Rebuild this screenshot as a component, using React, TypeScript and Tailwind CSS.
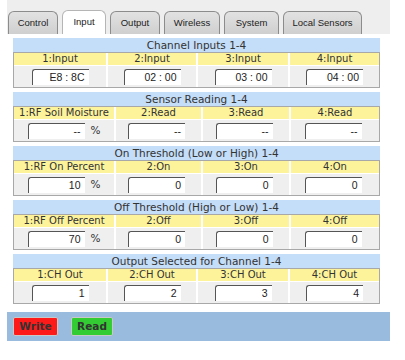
import { ReactNode } from 'react'

const tabs = [
  { name: 'Control', w: 'w-[50px]' },
  { name: 'Input', w: 'w-[44px]', active: true },
  { name: 'Output', w: 'w-[50px]' },
  { name: 'Wireless', w: 'w-[56px]' },
  { name: 'System', w: 'w-[55px]' },
  { name: 'Local Sensors', w: 'w-[79px]' },
]

interface Section {
  title: string
  cols: string
  labels: string[]
  values: string[]
  unit?: boolean
}

const wide = 'grid-cols-[100px_85px_86px_1fr]'
const narrow = 'grid-cols-[92px_88px_90px_1fr]'

const sections: Section[] = [
  {
    title: 'Channel Inputs 1-4',
    cols: narrow,
    labels: ['1:Input', '2:Input', '3:Input', '4:Input'],
    values: ['E8 : 8C', '02 : 00', '03 : 00', '04 : 00'],
  },
  {
    title: 'Sensor Reading 1-4',
    cols: wide,
    labels: ['1:RF Soil Moisture', '2:Read', '3:Read', '4:Read'],
    values: ['--', '--', '--', '--'],
    unit: true,
  },
  {
    title: 'On Threshold (Low or High) 1-4',
    cols: wide,
    labels: ['1:RF On Percent', '2:On', '3:On', '4:On'],
    values: ['10', '0', '0', '0'],
    unit: true,
  },
  {
    title: 'Off Threshold (High or Low) 1-4',
    cols: wide,
    labels: ['1:RF Off Percent', '2:Off', '3:Off', '4:Off'],
    values: ['70', '0', '0', '0'],
    unit: true,
  },
  {
    title: 'Output Selected for Channel 1-4',
    cols: narrow,
    labels: ['1:CH Out', '2:CH Out', '3:CH Out', '4:CH Out'],
    values: ['1', '2', '3', '4'],
  },
]

function Field({ value }: { value: string }) {
  return (
    <div className="h-[16px] w-[57px] rounded-tl-[3px] border-l border-t border-[#555] bg-white pr-[4px] text-right font-['Liberation_Sans',sans-serif] text-[10.5px] leading-[15px] text-[#222]">
      {value}
    </div>
  )
}

function Cell({ children, first, unit }: { children: ReactNode; first: boolean; unit?: boolean }) {
  return (
    <div className={`flex h-[21px] items-center justify-center bg-[#efefef] ${!first && unit ? 'pr-[4px]' : ''}`}>
      {children}
      {first && unit && <span className="ml-[6px] text-[10.5px] text-[#333]">%</span>}
    </div>
  )
}

export default function App() {
  return (
    <div className="h-[360px] w-[405px] bg-white font-['DejaVu_Sans',sans-serif]">
      <div className="ml-[7px] w-[383px]">
        <div className="flex h-[34px] items-end gap-[4px] bg-[#eeeeee] pl-[1px]">
          {tabs.map((t) => (
            <div
              key={t.name}
              className={`${t.w} flex h-[23px] items-center justify-center rounded-t-[6px] border border-b-0 font-['Liberation_Sans',sans-serif] text-[9.5px] text-[#222] ${
                t.active ? 'h-[24px] border-[#b5b5b5] bg-white' : 'border-[#8c8c8c] bg-gradient-to-b from-[#e2e2e2] to-[#cfcfcf]'
              }`}
            >
              {t.name}
            </div>
          ))}
        </div>

        <div className="flex flex-col gap-[4px] bg-white pb-[8px] pl-[6px] pr-[10px] pt-[4px]">
          {sections.map((s) => (
            <div key={s.title}>
              <div className="h-[14px] bg-[#c4ddf8] text-center text-[10.5px] leading-[14px] text-[#333]">{s.title}</div>
              <div className={`grid ${s.cols} gap-x-[2px] gap-y-px border border-[#a8a8a8] bg-white`}>
                {s.labels.map((l) => (
                  <div key={l} className="h-[12px] bg-[#fdf39b] text-center text-[10px] leading-[12px] text-[#333]">
                    {l}
                  </div>
                ))}
                {s.values.map((v, i) => (
                  <Cell key={i} first={i === 0} unit={s.unit}>
                    <Field value={v} />
                  </Cell>
                ))}
              </div>
            </div>
          ))}
        </div>

        <div className="flex h-[29px] items-center gap-[13px] bg-[#99bbdd] pl-[6px]">
          <button
            type="button"
            className="h-[19px] w-[45px] rounded-[2px] border border-[#c8c8c8] bg-[#ff1a1a] text-[10.5px] font-bold text-[#333]"
          >
            Write
          </button>
          <button
            type="button"
            className="h-[19px] w-[42px] rounded-[2px] border border-[#c8c8c8] bg-[#33cc33] text-[10.5px] font-bold text-[#333]"
          >
            Read
          </button>
        </div>
      </div>
    </div>
  )
}
